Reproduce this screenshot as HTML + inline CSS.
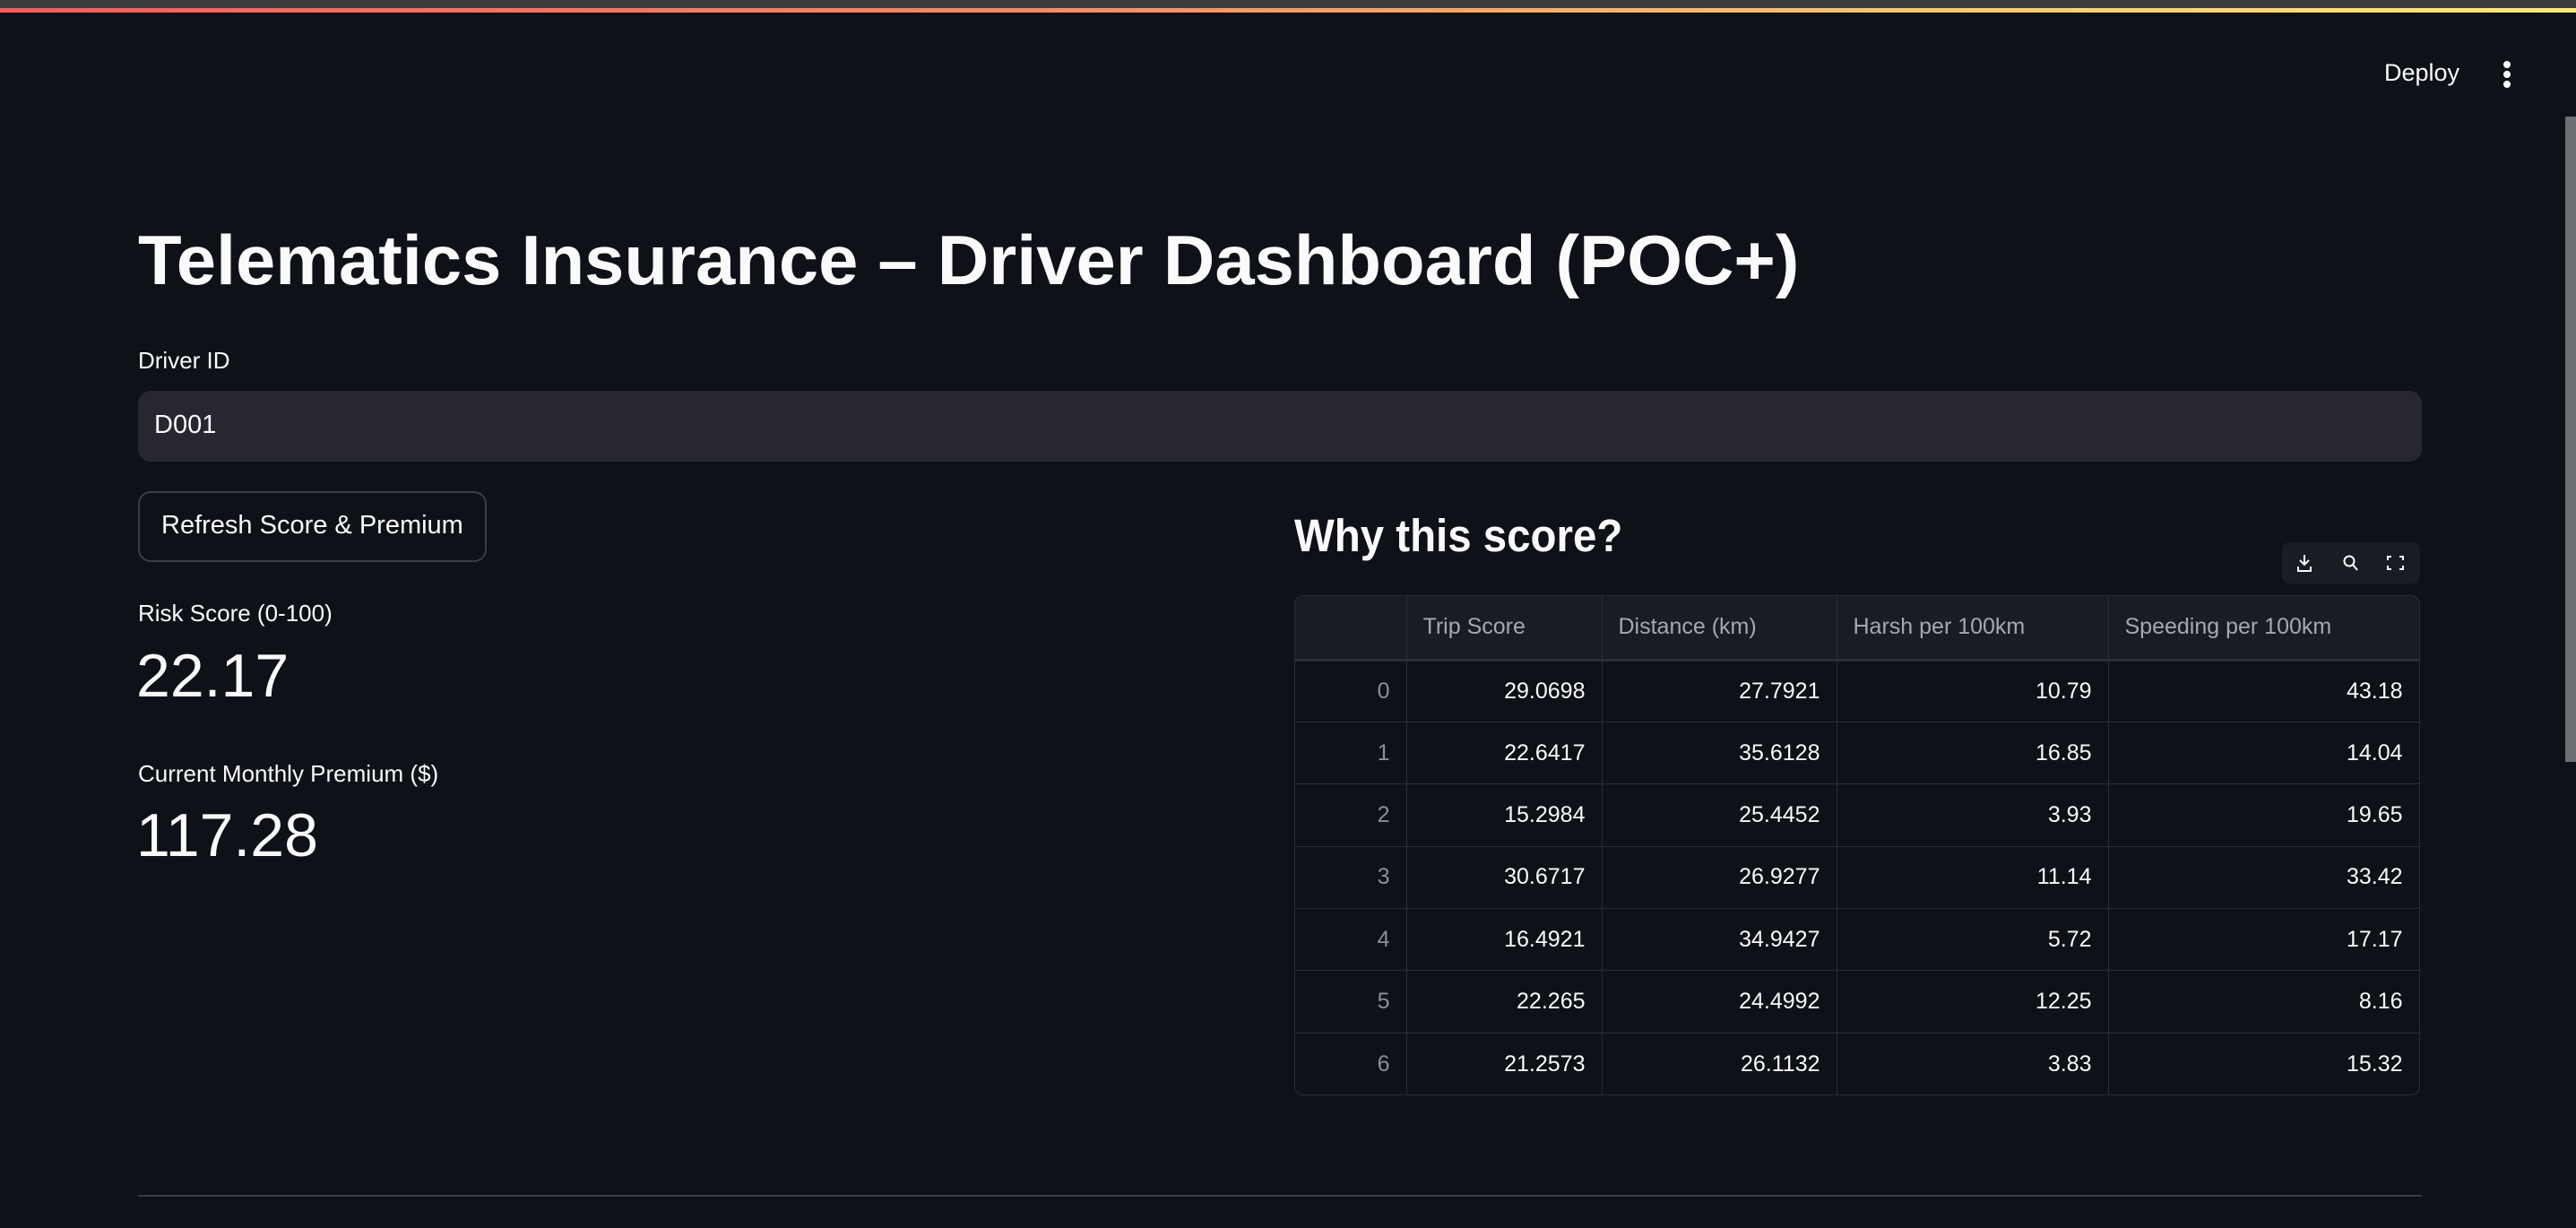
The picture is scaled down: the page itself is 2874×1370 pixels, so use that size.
<!DOCTYPE html>
<html><head><meta charset="utf-8"><style>
*{margin:0;padding:0;box-sizing:border-box}
html,body{width:2874px;height:1370px;background:#0e1117;overflow:hidden;font-family:"Liberation Sans",sans-serif;color:#fafafa}
.a{position:absolute;white-space:nowrap}
.topgray{position:absolute;left:0;top:0;width:2874px;height:9px;background:#3d3d3d}
.grad{position:absolute;left:0;top:9px;width:2874px;height:5px;background:linear-gradient(90deg,#ee5f5f 0%,#f08c6a 40%,#f5c874 75%,#fde77e 100%)}
table{border-collapse:collapse;font-size:25px}
td,th{border:1.5px solid #2b2d36;padding:0 18px;text-align:right;height:69.4px;font-weight:normal}
th{text-align:left;color:#a3a8b4;height:72px;background:#1a1c23;border-bottom:3px solid #2b2d36}
td.i{color:#8b8f9a}
</style></head><body>
<div class="topgray"></div><div class="grad"></div>
<div class="a" style="left:2660px;top:66px;font-size:27px">Deploy</div>
<div class="a" style="left:2793px;top:68px;width:9px">
<div style="width:8px;height:8px;border-radius:50%;background:#fff;margin-bottom:3px"></div>
<div style="width:8px;height:8px;border-radius:50%;background:#fff;margin-bottom:3px"></div>
<div style="width:8px;height:8px;border-radius:50%;background:#fff"></div></div>
<div class="a" style="left:2862px;top:130px;width:12px;height:720px;background:#6e6f74"></div>

<div class="a" style="left:154px;top:245px;font-size:78px;font-weight:bold;transform:scaleX(1.02);transform-origin:left">Telematics Insurance – Driver Dashboard (POC+)</div>
<div class="a" style="left:154px;top:387px;font-size:26px">Driver ID</div>
<div class="a" style="left:154px;top:436px;width:2548px;height:79px;background:#262730;border-radius:14px"></div>
<div class="a" style="left:172px;top:458px;font-size:29px">D001</div>
<div class="a" style="left:154px;top:548px;width:389px;height:79px;border:2px solid #3b3d46;border-radius:14px"></div>
<div class="a" style="left:180px;top:570px;font-size:29px">Refresh Score &amp; Premium</div>
<div class="a" style="left:154px;top:669px;font-size:26px">Risk Score (0-100)</div>
<div class="a" style="left:152px;top:715px;font-size:68px">22.17</div>
<div class="a" style="left:154px;top:848px;font-size:26px">Current Monthly Premium ($)</div>
<div class="a" style="left:152px;top:893px;font-size:68px">117.28</div>

<div class="a" style="left:1444px;top:568px;font-size:51px;font-weight:bold;transform:scaleX(0.93);transform-origin:left">Why this score?</div>
<div class="a" style="left:2546px;top:605px;width:154px;height:46px;background:#1a1c23;border-radius:8px"></div>
<svg class="a" style="left:2560px;top:615px" width="130" height="26" viewBox="0 0 130 26" fill="none" stroke="#fafafa" stroke-width="2">
<path d="M11 4v11M6 10l5 5 5-5M4 17v5h14v-5"/>
<circle cx="61" cy="11" r="5.5"/><path d="M65 15l5 6"/>
<path d="M108 6h-4v4M117 6h4v4M108 20h-4v-4M117 20h4v-4"/>
</svg>
<div class="a" style="left:1444px;top:664px;width:1256px;height:558px;border:1.5px solid #2b2d36;border-radius:10px;overflow:hidden">
<table style="width:1256px;margin:-1.5px">
<colgroup><col style="width:125px"><col style="width:218px"><col style="width:262px"><col style="width:303px"><col></colgroup>
<tr><th></th><th>Trip Score</th><th>Distance (km)</th><th>Harsh per 100km</th><th>Speeding per 100km</th></tr>
<tr><td class="i">0</td><td>29.0698</td><td>27.7921</td><td>10.79</td><td>43.18</td></tr>
<tr><td class="i">1</td><td>22.6417</td><td>35.6128</td><td>16.85</td><td>14.04</td></tr>
<tr><td class="i">2</td><td>15.2984</td><td>25.4452</td><td>3.93</td><td>19.65</td></tr>
<tr><td class="i">3</td><td>30.6717</td><td>26.9277</td><td>11.14</td><td>33.42</td></tr>
<tr><td class="i">4</td><td>16.4921</td><td>34.9427</td><td>5.72</td><td>17.17</td></tr>
<tr><td class="i">5</td><td>22.265</td><td>24.4992</td><td>12.25</td><td>8.16</td></tr>
<tr><td class="i">6</td><td>21.2573</td><td>26.1132</td><td>3.83</td><td>15.32</td></tr>
</table></div>
<div class="a" style="left:154px;top:1333px;width:2548px;height:2px;background:#3a3c44"></div>
</body></html>
